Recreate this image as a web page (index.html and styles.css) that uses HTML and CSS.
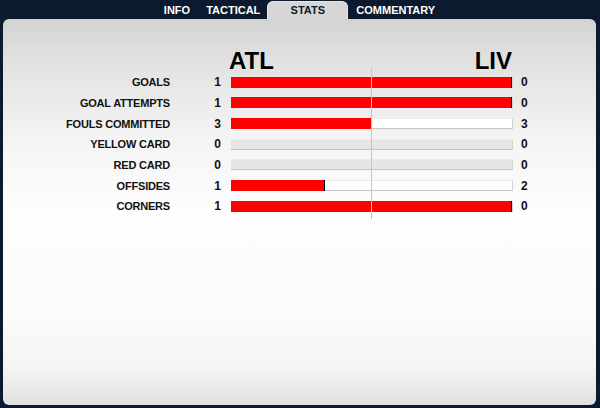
FILE: index.html
```html
<!DOCTYPE html>
<html>
<head>
<meta charset="utf-8">
<link rel="stylesheet" href="styles.css">
</head>
<body>
<nav class="tabs">
  <span class="tab">INFO</span>
  <span class="tab">TACTICAL</span>
  <span class="tab active">STATS</span>
  <span class="tab">COMMENTARY</span>
</nav>
<main class="panel">
  <div class="head">
    <span class="spacer"></span>
    <span class="spacer-n"></span>
    <div class="teams"><span>ATL</span><span>LIV</span></div>
  </div>
  <div class="rows">
    <div class="row"><span class="label">GOALS</span><span class="num">1</span><div class="bar"><div class="fill" style="width:100%"></div></div><span class="num r">0</span></div>
    <div class="row"><span class="label">GOAL ATTEMPTS</span><span class="num">1</span><div class="bar"><div class="fill" style="width:100%"></div></div><span class="num r">0</span></div>
    <div class="row"><span class="label">FOULS COMMITTED</span><span class="num">3</span><div class="bar"><div class="fill" style="width:50%"></div></div><span class="num r">3</span></div>
    <div class="row"><span class="label">YELLOW CARD</span><span class="num">0</span><div class="bar empty"></div><span class="num r">0</span></div>
    <div class="row"><span class="label">RED CARD</span><span class="num">0</span><div class="bar empty"></div><span class="num r">0</span></div>
    <div class="row"><span class="label">OFFSIDES</span><span class="num">1</span><div class="bar"><div class="fill" style="width:33.33%"></div></div><span class="num r">2</span></div>
    <div class="row"><span class="label">CORNERS</span><span class="num">1</span><div class="bar"><div class="fill" style="width:100%"></div></div><span class="num r">0</span></div>
  </div>
</main>
</body>
</html>
```
FILE: styles.css
```css
html, body {
  margin: 0;
  padding: 0;
  background: #0b1a2f;
  width: 600px;
  height: 408px;
  overflow: hidden;
  font-family: "Liberation Sans", Arial, sans-serif;
}
.tabs {
  display: flex;
  justify-content: center;
  align-items: flex-end;
  height: 19px;
  padding-right: 1px;
}
.tab {
  color: #ffffff;
  font-weight: bold;
  font-size: 11px;
  line-height: 18px;
  padding: 0 8px;
}
.tab.active {
  width: 81px;
  box-sizing: border-box;
  height: 18px;
  padding: 0;
  text-align: center;
  color: #0b1a2f;
  background: #d6d6d6;
  border: 1px solid #e8e8e8;
  border-bottom: none;
  border-radius: 6px 6px 0 0;
  margin: 0 0 0 -1px;
  line-height: 17px;
}
.panel {
  margin: 0 4px 0 3px;
  height: 386px;
  border-radius: 6px;
  background: linear-gradient(to bottom, #d3d3d3 0px, #e2e2e2 45px, #f4f4f4 120px, #fdfdfd 190px, #fcfcfc 290px, #f5f5f5 345px, #eaeaea 370px, #e0e0e0 386px);
  padding-top: 29px;
  box-sizing: border-box;
}
.head {
  display: flex;
  height: 24px;
}
.spacer { width: 167px; }
.spacer-n { width: 59px; }
.teams {
  width: 283px;
  display: flex;
  justify-content: space-between;
  font-weight: bold;
  font-size: 24px;
  line-height: 25px;
  color: #000;
}
.rows {
  position: relative;
}
.rows::after {
  content: "";
  position: absolute;
  left: 368px;
  top: -4px;
  bottom: -2px;
  width: 1px;
  background: #c4c4c4;
}
.row {
  display: flex;
  align-items: center;
  height: 20.67px;
}
.label {
  width: 167px;
  text-align: right;
  font-weight: bold;
  font-size: 11px;
  letter-spacing: -0.2px;
  color: #111;
}
.num {
  width: 51px;
  text-align: right;
  font-weight: bold;
  font-size: 12px;
  color: #111;
}
.num.r {
  width: auto;
  text-align: left;
  margin-left: 8px;
}
.bar {
  margin-left: 10px;
  width: 282px;
  height: 11px;
  box-sizing: border-box;
  background: #ffffff;
  border-bottom: 1px solid #c6c6c6;
  border-right: 1px solid #d2d2d2;
  border-top: 1px solid #ececec;
  position: relative;
}
.bar.empty {
  background: #e6e6e6;
}
.fill {
  position: absolute;
  left: 0;
  top: -1px;
  height: 11px;
  background: #ff0000;
  box-sizing: border-box;
  border-right: 1px solid #000;
}
```
